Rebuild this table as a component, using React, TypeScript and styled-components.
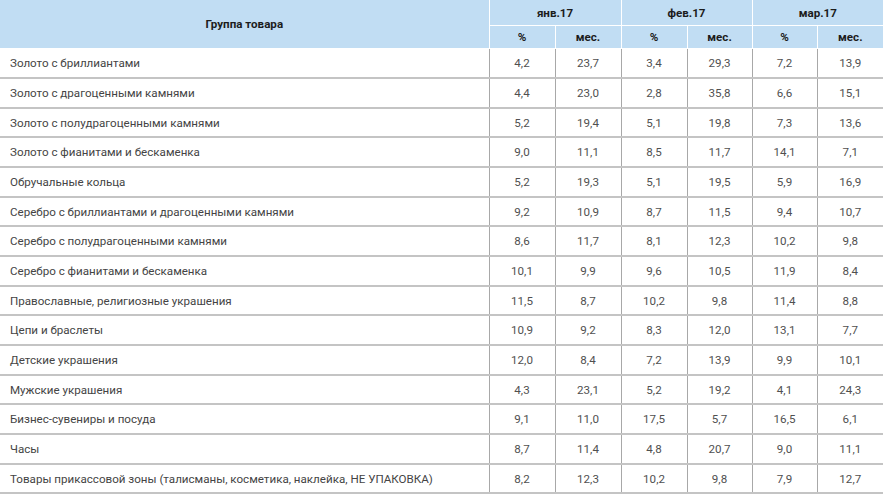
import React from "react";
import styled, { createGlobalStyle } from "styled-components";

const GlobalStyle = createGlobalStyle`
  html, body {
    margin: 0;
    padding: 0;
    background: #fff;
  }
  body {
    font-family: Roboto, "Noto Sans", sans-serif;
  }
`;

const Table = styled.table`
  width: 883px;
  border-collapse: collapse;
  table-layout: fixed;
  font-size: 11.6px;
`;

const Col = styled.col<{ $w: number }>`
  width: ${(p) => p.$w}px;
`;

const HeadCell = styled.th<{ $tall?: boolean }>`
  background: #c1ddf3;
  color: #1c1c1c;
  font-weight: 700;
  font-size: 11.6px;
  text-align: center;
  padding: 0;
  border: 1px solid #ffffff;
  border-top: none;
  height: ${(p) => (p.$tall ? "25px" : "22px")};
  &:first-child {
    border-left: none;
  }
  &:last-child {
    border-right: none;
  }
`;

const GroupHead = styled(HeadCell)`
  border-left: none;
`;

const Row = styled.tr`
  height: 29.67px;
  border-bottom: 2px solid #c4c4c4;
`;

const NameCell = styled.td`
  padding: 0 0 0 10px;
  color: #444444;
  text-align: left;
  white-space: nowrap;
  border-right: 1px solid #a8a8a8;
`;

const NumCell = styled.td`
  padding: 0;
  color: #505050;
  text-align: center;
  border-right: 1px solid #a8a8a8;
  &:last-child {
    border-right: none;
  }
`;

type Item = { name: string; values: string[] };

const months = ["янв.17", "фев.17", "мар.17"];
const widths = [489, 66, 66, 66, 65, 65, 66];

const items: Item[] = [
  { name: "Золото с бриллиантами", values: ["4,2", "23,7", "3,4", "29,3", "7,2", "13,9"] },
  { name: "Золото с драгоценными камнями", values: ["4,4", "23,0", "2,8", "35,8", "6,6", "15,1"] },
  { name: "Золото с полудрагоценными камнями", values: ["5,2", "19,4", "5,1", "19,8", "7,3", "13,6"] },
  { name: "Золото с фианитами и бескаменка", values: ["9,0", "11,1", "8,5", "11,7", "14,1", "7,1"] },
  { name: "Обручальные кольца", values: ["5,2", "19,3", "5,1", "19,5", "5,9", "16,9"] },
  { name: "Серебро с бриллиантами и драгоценными камнями", values: ["9,2", "10,9", "8,7", "11,5", "9,4", "10,7"] },
  { name: "Серебро с полудрагоценными камнями", values: ["8,6", "11,7", "8,1", "12,3", "10,2", "9,8"] },
  { name: "Серебро с фианитами и бескаменка", values: ["10,1", "9,9", "9,6", "10,5", "11,9", "8,4"] },
  { name: "Православные, религиозные украшения", values: ["11,5", "8,7", "10,2", "9,8", "11,4", "8,8"] },
  { name: "Цепи и браслеты", values: ["10,9", "9,2", "8,3", "12,0", "13,1", "7,7"] },
  { name: "Детские украшения", values: ["12,0", "8,4", "7,2", "13,9", "9,9", "10,1"] },
  { name: "Мужские украшения", values: ["4,3", "23,1", "5,2", "19,2", "4,1", "24,3"] },
  { name: "Бизнес-сувениры и посуда", values: ["9,1", "11,0", "17,5", "5,7", "16,5", "6,1"] },
  { name: "Часы", values: ["8,7", "11,4", "4,8", "20,7", "9,0", "11,1"] },
  {
    name: "Товары прикассовой зоны (талисманы, косметика, наклейка, НЕ УПАКОВКА)",
    values: ["8,2", "12,3", "10,2", "9,8", "7,9", "12,7"],
  },
];

export default function App() {
  return (
    <>
      <GlobalStyle />
      <Table>
        <colgroup>
          {widths.map((w, i) => (
            <Col key={i} $w={w} />
          ))}
        </colgroup>
        <thead>
          <tr>
            <GroupHead rowSpan={2}>Группа товара</GroupHead>
            {months.map((m) => (
              <HeadCell key={m} colSpan={2} $tall>
                {m}
              </HeadCell>
            ))}
          </tr>
          <tr>
            {months.map((m) => (
              <React.Fragment key={m}>
                <HeadCell>%</HeadCell>
                <HeadCell>мес.</HeadCell>
              </React.Fragment>
            ))}
          </tr>
        </thead>
        <tbody>
          {items.map((item) => (
            <Row key={item.name}>
              <NameCell>{item.name}</NameCell>
              {item.values.map((v, i) => (
                <NumCell key={i}>{v}</NumCell>
              ))}
            </Row>
          ))}
        </tbody>
      </Table>
    </>
  );
}
